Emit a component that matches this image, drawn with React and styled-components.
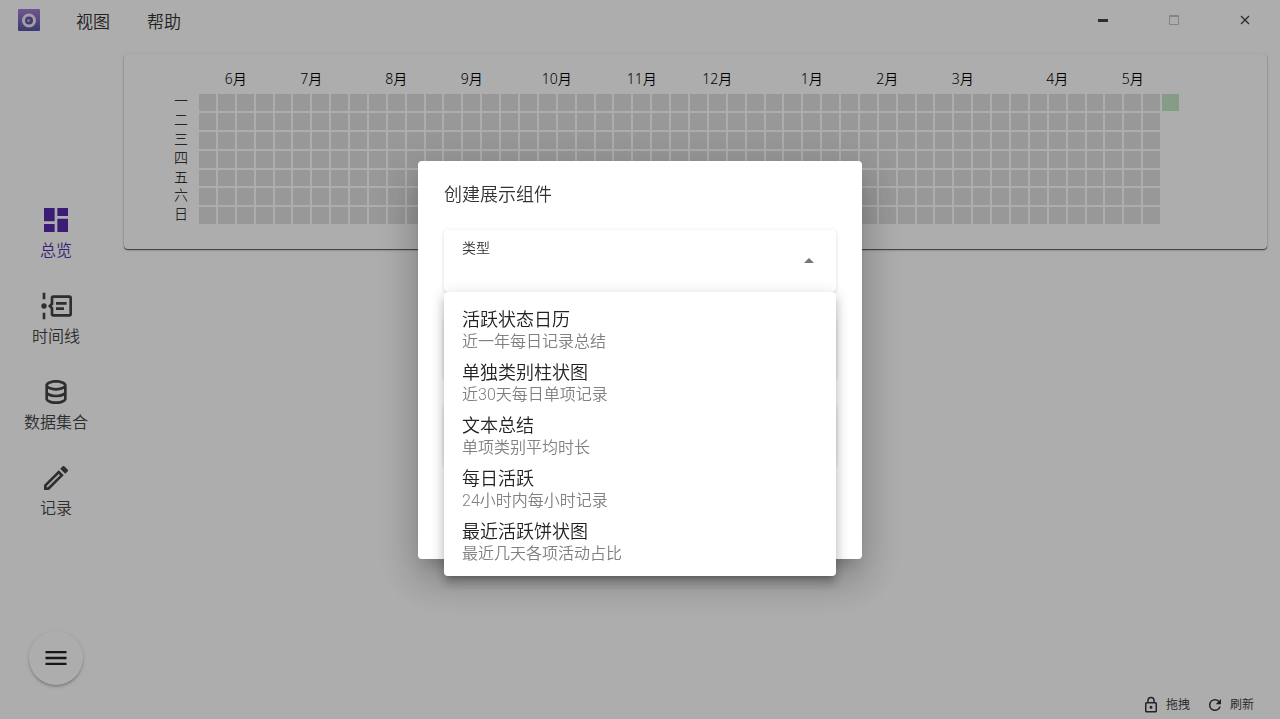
import React, { useState } from 'react';
import styled, { createGlobalStyle } from 'styled-components';

const MONTHS = [
  { name: '6月', from: 1, to: 5 },
  { name: '7月', from: 5, to: 9 },
  { name: '8月', from: 9, to: 14 },
  { name: '9月', from: 13, to: 18 },
  { name: '10月', from: 18, to: 22 },
  { name: '11月', from: 22, to: 27 },
  { name: '12月', from: 26, to: 31 },
  { name: '1月', from: 31, to: 36 },
  { name: '2月', from: 35, to: 40 },
  { name: '3月', from: 39, to: 44 },
  { name: '4月', from: 44, to: 49 },
  { name: '5月', from: 48, to: 53 },
];
const WEEKDAYS = ['一', '二', '三', '四', '五', '六', '日'];
// 51 full weeks, then the first day of the current one
const DAYS = Array.from({ length: 51 * 7 + 1 }, (_, i) => ({ id: i, active: i === 51 * 7 }));

const ICONS = {
  dashboard: 'M3 13h8V3H3v10zm0 8h8v-6H3v6zm10 0h8V11h-8v10zm0-18v6h8V3h-8z',
  timeline: 'M4 2v5H2V2h2zM2 22v-5h2v5H2zM3 10a2 2 0 1 1 0 4 2 2 0 0 1 0-4zM24 6v12a2 2 0 0 1-2 2H10a2 2 0 0 1-2-2v-4l-2-2 2-2V6a2 2 0 0 1 2-2h12a2 2 0 0 1 2 2zM22 6H10v4.83L8.83 12 10 13.17V18h12V6zM20 9h-8v2h8V9zM18 13h-6v2h6v-2z',
  database: 'M12 3C7.58 3 4 4.79 4 7v10c0 2.21 3.59 4 8 4s8-1.79 8-4V7c0-2.21-3.58-4-8-4m6 14c0 .5-2.13 2-6 2s-6-1.5-6-2v-2.23c1.61.78 3.72 1.23 6 1.23s4.39-.45 6-1.23V17m0-4.55c-1.3.95-3.58 1.55-6 1.55s-4.7-.6-6-1.55V9.64c1.47.83 3.61 1.36 6 1.36s4.53-.53 6-1.36v2.81M12 9C8.13 9 6 7.5 6 7s2.13-2 6-2 6 1.5 6 2-2.13 2-6 2z',
  pencil: 'M14.06 9l.94.94L5.92 19H5v-.92L14.06 9m3.6-6c-.25 0-.51.1-.7.29l-1.83 1.83 3.75 3.75 1.83-1.83c.39-.39.39-1.04 0-1.41l-2.34-2.34c-.2-.2-.45-.29-.71-.29m-3.6 3.19L3 17.25V21h3.75L17.81 9.94l-3.75-3.75z',
  menu: 'M3 18h18v-2H3v2zm0-5h18v-2H3v2zm0-7v2h18V6H3z',
  lock: 'M12 17a2 2 0 1 0 0-4 2 2 0 0 0 0 4m6-9h-1V6A5 5 0 0 0 7 6v2H6a2 2 0 0 0-2 2v10c0 1.1.9 2 2 2h12a2 2 0 0 0 2-2V10a2 2 0 0 0-2-2M8.9 6a3.1 3.1 0 0 1 6.2 0v2H8.9V6M18 20H6V10h12v10z',
  refresh: 'M17.65 6.35A7.96 7.96 0 0 0 12 4a8 8 0 1 0 7.73 10h-2.08A6 6 0 1 1 12 6c1.66 0 3.14.69 4.22 1.78L13 11h7V4l-2.35 2.35z',
};

const NAV = [
  { name: '总览', icon: 'dashboard', active: true },
  { name: '时间线', icon: 'timeline' },
  { name: '数据集合', icon: 'database' },
  { name: '记录', icon: 'pencil' },
];

const TYPES = [
  { name: '活跃状态日历', hint: '近一年每日记录总结' },
  { name: '单独类别柱状图', hint: '近30天每日单项记录' },
  { name: '文本总结', hint: '单项类别平均时长' },
  { name: '每日活跃', hint: '24小时内每小时记录' },
  { name: '最近活跃饼状图', hint: '最近几天各项活动占比' },
];

const Icon = ({ name, size }) => (
  <svg width={size} height={size} viewBox="0 0 24 24" fill="currentColor" fillRule="evenodd" aria-hidden="true">
    <path d={ICONS[name]} />
  </svg>
);

const Logo = () => (
  <svg width="22" height="22" viewBox="0 0 22 22" aria-hidden="true">
    <defs>
      <linearGradient id="logo" x1="0" y1="0" x2="0" y2="1">
        <stop offset="0" stopColor="#a67fd4" />
        <stop offset="1" stopColor="#5656a4" />
      </linearGradient>
    </defs>
    <rect width="22" height="22" rx="1" fill="url(#logo)" />
    <circle cx="11" cy="11.500" r="5.500" fill="#6558a8" stroke="#eeeaf2" strokeWidth="3" />
    <circle cx="10.500" cy="11.500" r="1.500" fill="#b8b0dc" />
  </svg>
);

const TitleBar = () => (
  <StyledTitleBar>
    <Logo />
    <StyledMenuBar>
      <StyledMenuButton type="button">视图</StyledMenuButton>
      <StyledMenuButton type="button">帮助</StyledMenuButton>
    </StyledMenuBar>
    <StyledWindowButton type="button" aria-label="最小化">
      <svg width="12" height="12" viewBox="0 0 12 12"><path d="M1 5h10v3H1z" fill="#444" /></svg>
    </StyledWindowButton>
    <StyledWindowButton type="button" aria-label="最大化" disabled>
      <svg width="12" height="12" viewBox="0 0 12 12" fill="none" stroke="#c4c4c4"><path d="M1.500 1.500h9v9h-9zM1.500 2.500h9" /></svg>
    </StyledWindowButton>
    <StyledWindowButton type="button" aria-label="关闭">
      <svg width="12" height="12" viewBox="0 0 12 12" fill="none" stroke="#444" strokeWidth="1.400"><path d="M2 2l8 8M10 2l-8 8" /></svg>
    </StyledWindowButton>
  </StyledTitleBar>
);

const Sidebar = () => (
  <StyledSidebar>
    <StyledNav>
      {NAV.map(({ name, icon, active }) => (
        <StyledNavLink key={name} href="#" $active={active}>
          <Icon name={icon} size={32} />
          <span>{name}</span>
        </StyledNavLink>
      ))}
    </StyledNav>
    <StyledFab type="button" aria-label="菜单"><Icon name="menu" size={28} /></StyledFab>
  </StyledSidebar>
);

const ActivityCalendar = () => (
  <StyledCard>
    <StyledMonths>
      {MONTHS.map(({ name, from, to }) => <StyledMonth key={name} $from={from} $to={to}>{name}</StyledMonth>)}
    </StyledMonths>
    <StyledCalendarBody>
      <StyledWeekdays>
        {WEEKDAYS.map(day => <span key={day}>{day}</span>)}
      </StyledWeekdays>
      <StyledDays>
        {DAYS.map(({ id, active }) => <StyledDay key={id} $active={active} />)}
      </StyledDays>
    </StyledCalendarBody>
  </StyledCard>
);

const CreateDialog = () => {
  const [type, setType] = useState('');
  return (
    <StyledScrim>
      <StyledDialog role="dialog" aria-labelledby="dialog-title">
        <StyledDialogTitle id="dialog-title">创建展示组件</StyledDialogTitle>
        <StyledFields>
          <StyledField>
            <StyledFieldLabel htmlFor="type">类型</StyledFieldLabel>
            <StyledSelect id="type" value={type} onChange={e => setType(e.target.value)}>
              <option value="" />
              {TYPES.map(({ name }) => <option key={name} value={name}>{name}</option>)}
            </StyledSelect>
            <StyledArrow />
            <StyledOptions role="listbox" aria-label="类型">
              {TYPES.map(({ name, hint }) => (
                <StyledOption key={name} role="option" aria-selected={type === name} onClick={() => setType(name)}>
                  <strong>{name}</strong>
                  <small>{hint}</small>
                </StyledOption>
              ))}
            </StyledOptions>
          </StyledField>
          <StyledField><StyledInput aria-label="名称" /></StyledField>
          <StyledField><StyledInput aria-label="数据" /></StyledField>
        </StyledFields>
      </StyledDialog>
    </StyledScrim>
  );
};

export default function App() {
  return (
    <>
      <GlobalStyle />
      <StyledPage>
        <TitleBar />
        <StyledContent>
          <Sidebar />
          <StyledMain>
            <ActivityCalendar />
            <StyledFooter>
              <StyledFooterButton type="button"><Icon name="lock" size={18} />拖拽</StyledFooterButton>
              <StyledFooterButton type="button"><Icon name="refresh" size={18} />刷新</StyledFooterButton>
            </StyledFooter>
          </StyledMain>
        </StyledContent>
      </StyledPage>
      <CreateDialog />
    </>
  );
}

const GlobalStyle = createGlobalStyle`
  *, *::before, *::after {
    box-sizing:border-box;
  }
  body {
    margin:0;
    background:#FFF;
    color:#333;
    font-family:Roboto, "Noto Sans CJK SC", sans-serif;
    font-size:16px;
    font-weight:350;
  }
  button, input, select {
    border:0;
    padding:0;
    background:none;
    color:inherit;
    font:inherit;
  }
  svg {
    display:block;
    flex:none;
  }
`;

const StyledPage = styled.div`
  display:flex;
  flex-direction:column;
  min-height:100vh;
`;
const StyledTitleBar = styled.header`
  display:flex;
  align-items:center;
  height:40px;
  padding-left:18px;
`;
const StyledMenuBar = styled.nav`
  display:flex;
  flex:1;
  gap:37px;
  padding:3px 0 0 36px;
`;
const StyledMenuButton = styled.button`
  font-size:17px;
  line-height:24px;
`;
const StyledWindowButton = styled.button`
  display:flex;
  justify-content:center;
  align-items:center;
  width:71px;
  height:40px;
`;
const StyledContent = styled.div`
  display:flex;
  flex:1;
`;
const StyledSidebar = styled.aside`
  display:flex;
  flex-direction:column;
  align-items:center;
  width:112px;
  padding-bottom:34px;
`;
const StyledNav = styled.nav`
  display:flex;
  flex-direction:column;
  justify-content:center;
  flex:1;
  gap:29px;
  padding-top:52px;
`;
const StyledNavLink = styled.a`
  display:flex;
  flex-direction:column;
  align-items:center;
  gap:4px;
  color:${props => props.$active ? '#582cb0' : '#444'};
  line-height:21px;
  text-decoration:none;
`;
const StyledFab = styled.button`
  display:flex;
  justify-content:center;
  align-items:center;
  width:54px;
  height:54px;
  border-radius:50%;
  color:#222;
  box-shadow:0 2px 3px -1px rgba(0,0,0,0.3), 0 1px 4px rgba(0,0,0,0.12);
`;
const StyledMain = styled.main`
  display:flex;
  flex-direction:column;
  flex:1;
  min-width:0;
  padding:14px 13px 4px 12px;
`;
const StyledCard = styled.section`
  padding:14px 88px 25px 50px;
  border-radius:4px;
  color:#000;
  font-family:"Noto Sans", "Noto Sans CJK SC", sans-serif;
  font-size:14px;
  box-shadow:0 1px 1px rgba(0,0,0,0.6), 0 1px 3px rgba(0,0,0,0.2);
`;
const StyledMonths = styled.div`
  display:grid;
  grid-template-columns:repeat(52, minmax(0, 1fr));
  column-gap:2px;
  padding:0 0 4px 25px;
  line-height:22px;
`;
const StyledMonth = styled.span`
  grid-area:1 / ${props => props.$from} / 2 / ${props => props.$to};
  text-align:center;
`;
const StyledCalendarBody = styled.div`
  display:flex;
  gap:11px;
`;
const StyledWeekdays = styled.div`
  display:grid;
  grid-template-rows:repeat(7, 1fr);
  gap:2px;
  width:14px;
  font-weight:300;
  line-height:14px;
`;
const StyledDays = styled.div`
  display:grid;
  grid-auto-flow:column;
  grid-template-columns:repeat(52, minmax(0, 1fr));
  grid-template-rows:repeat(7, auto);
  gap:2px;
  flex:1;
`;
const StyledDay = styled.i`
  aspect-ratio:1;
  background:${props => props.$active ? '#c6e6c8' : '#e0e0e0'};
`;
const StyledFooter = styled.footer`
  display:flex;
  justify-content:flex-end;
  gap:16px;
  margin-top:auto;
  padding-right:13px;
`;
const StyledFooterButton = styled.button`
  display:flex;
  align-items:center;
  gap:6px;
  font-size:12px;
  line-height:20px;
`;

const StyledScrim = styled.div`
  position:fixed;
  inset:0;
  display:flex;
  justify-content:center;
  align-items:center;
  background:rgba(0,0,0,0.32);
`;
const StyledDialog = styled.section`
  width:444px;
  max-width:90%;
  padding:20px 26px 93px;
  border-radius:4px;
  background:#FFF;
  box-shadow:0 11px 15px -7px rgba(0,0,0,0.2), 0 24px 38px 3px rgba(0,0,0,0.14), 0 9px 46px 8px rgba(0,0,0,0.12);
`;
const StyledDialogTitle = styled.h2`
  margin:0 0 21px;
  font-size:18px;
  font-weight:350;
  line-height:28px;
`;
const StyledFields = styled.div`
  display:grid;
  gap:25px;
`;
const StyledField = styled.div`
  position:relative;
  display:flex;
  flex-direction:column;
  height:62px;
  padding:8px 18px;
  border-radius:4px;
  box-shadow:0 2px 2px -1px rgba(0,0,0,0.14), 0 1px 4px rgba(0,0,0,0.14);
`;
const StyledFieldLabel = styled.label`
  font-size:14px;
  line-height:20px;
`;
const StyledSelect = styled.select`
  flex:1;
  appearance:none;
  outline:0;
`;
const StyledInput = styled.input`
  flex:1;
  outline:0;
`;
const StyledArrow = styled.span`
  position:absolute;
  top:28px;
  right:22px;
  border:5px solid transparent;
  border-top:0;
  border-bottom-color:#757575;
  pointer-events:none;
`;
const StyledOptions = styled.ul`
  position:absolute;
  top:100%;
  left:0;
  right:0;
  z-index:1;
  margin:0;
  padding:11px 0 8px;
  border-radius:4px;
  background:#FFF;
  list-style:none;
  box-shadow:0 5px 5px -3px rgba(0,0,0,0.2), 0 8px 10px 1px rgba(0,0,0,0.14), 0 3px 14px 2px rgba(0,0,0,0.12);
`;
const StyledOption = styled.li`
  display:flex;
  flex-direction:column;
  height:53px;
  padding:5px 18px;
  cursor:pointer;

  strong {
    color:#222;
    font-size:18px;
    font-weight:350;
    line-height:24px;
  }
  small {
    color:#808080;
    font-size:16px;
    line-height:20px;
  }
`;
